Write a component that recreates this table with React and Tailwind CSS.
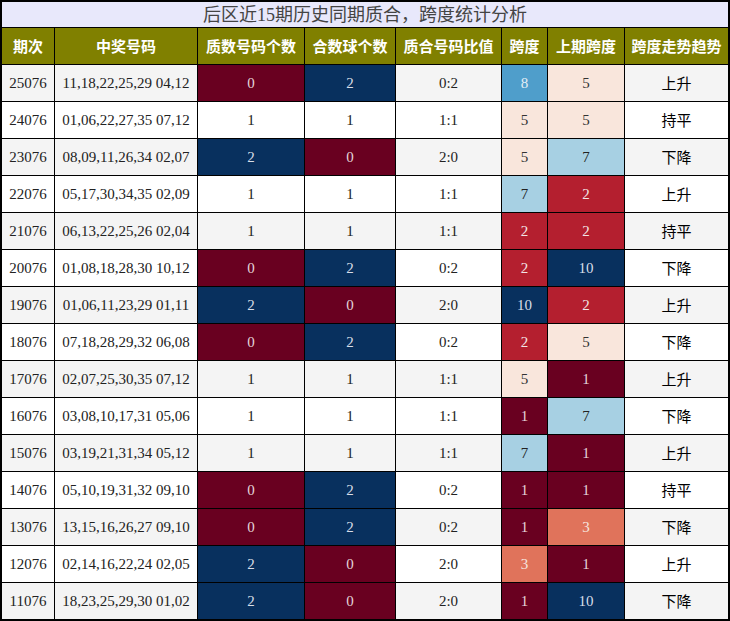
import React from "react";

const C = {
  dr: "bg-[#690020] text-[#e4d6da]",
  nv: "bg-[#08305e] text-[#d8dee8]",
  rd: "bg-[#b41f2f] text-[#f2e4e6]",
  lb: "bg-[#a7d0e3] text-[#222]",
  pc: "bg-[#f9e6dc] text-[#333]",
  bl: "bg-[#4f9ecb] text-[#e4eef6]",
  sm: "bg-[#e0735b] text-[#f6e4de]",
};

const rows = [
  ["25076", "11,18,22,25,29 04,12", 0, 2, "0:2", 8, "bl", 5, "pc", "上升"],
  ["24076", "01,06,22,27,35 07,12", 1, 1, "1:1", 5, "pc", 5, "pc", "持平"],
  ["23076", "08,09,11,26,34 02,07", 2, 0, "2:0", 5, "pc", 7, "lb", "下降"],
  ["22076", "05,17,30,34,35 02,09", 1, 1, "1:1", 7, "lb", 2, "rd", "上升"],
  ["21076", "06,13,22,25,26 02,04", 1, 1, "1:1", 2, "rd", 2, "rd", "持平"],
  ["20076", "01,08,18,28,30 10,12", 0, 2, "0:2", 2, "rd", 10, "nv", "下降"],
  ["19076", "01,06,11,23,29 01,11", 2, 0, "2:0", 10, "nv", 2, "rd", "上升"],
  ["18076", "07,18,28,29,32 06,08", 0, 2, "0:2", 2, "rd", 5, "pc", "下降"],
  ["17076", "02,07,25,30,35 07,12", 1, 1, "1:1", 5, "pc", 1, "dr", "上升"],
  ["16076", "03,08,10,17,31 05,06", 1, 1, "1:1", 1, "dr", 7, "lb", "下降"],
  ["15076", "03,19,21,31,34 05,12", 1, 1, "1:1", 7, "lb", 1, "dr", "上升"],
  ["14076", "05,10,19,31,32 09,10", 0, 2, "0:2", 1, "dr", 1, "dr", "持平"],
  ["13076", "13,15,16,26,27 09,10", 0, 2, "0:2", 1, "dr", 3, "sm", "下降"],
  ["12076", "02,14,16,22,24 02,05", 2, 0, "2:0", 3, "sm", 1, "dr", "上升"],
  ["11076", "18,23,25,29,30 01,02", 2, 0, "2:0", 1, "dr", 10, "nv", "下降"],
];

const heads = ["期次", "中奖号码", "质数号码个数", "合数球个数", "质合号码比值", "跨度", "上期跨度", "跨度走势趋势"];

function countCls(n, plain) {
  if (n === 1) return plain;
  return n === 0 ? C.dr : C.nv;
}

export default function App() {
  return (
    <div className="w-[730px] h-[621px] bg-black border-2 border-black flex flex-col gap-px font-['Liberation_Serif','Noto_Sans_CJK_SC',serif] text-[15px]">
      <div className="h-[25px] bg-[#e8e8fb] text-[#444] text-[18px] flex items-center justify-center leading-none">
        后区近15期历史同期质合，跨度统计分析
      </div>
      <div className="grid grid-cols-[52px_142px_106px_90px_105px_45px_76px_103px] gap-px">
        {heads.map((h) => (
          <div key={h} className="h-[36px] bg-[#808000] text-white font-bold flex items-center justify-center font-['Noto_Sans_CJK_SC',sans-serif]">
            {h}
          </div>
        ))}
        {rows.map((r, i) => {
          const plain = i % 2 === 0 ? "bg-[#f4f4f4] text-[#222]" : "bg-white text-[#222]";
          const cell = "h-[36px] flex items-center justify-center";
          return (
            <React.Fragment key={r[0]}>
              <div className={`${cell} ${plain}`}>{r[0]}</div>
              <div className={`${cell} ${plain}`}>{r[1]}</div>
              <div className={`${cell} ${countCls(r[2], plain)}`}>{r[2]}</div>
              <div className={`${cell} ${countCls(r[3], plain)}`}>{r[3]}</div>
              <div className={`${cell} ${plain}`}>{r[4]}</div>
              <div className={`${cell} ${C[r[6]]}`}>{r[5]}</div>
              <div className={`${cell} ${C[r[8]]}`}>{r[7]}</div>
              <div className={`${cell} ${plain} !text-black font-['Noto_Sans_CJK_SC',sans-serif]`}>{r[9]}</div>
            </React.Fragment>
          );
        })}
      </div>
    </div>
  );
}
